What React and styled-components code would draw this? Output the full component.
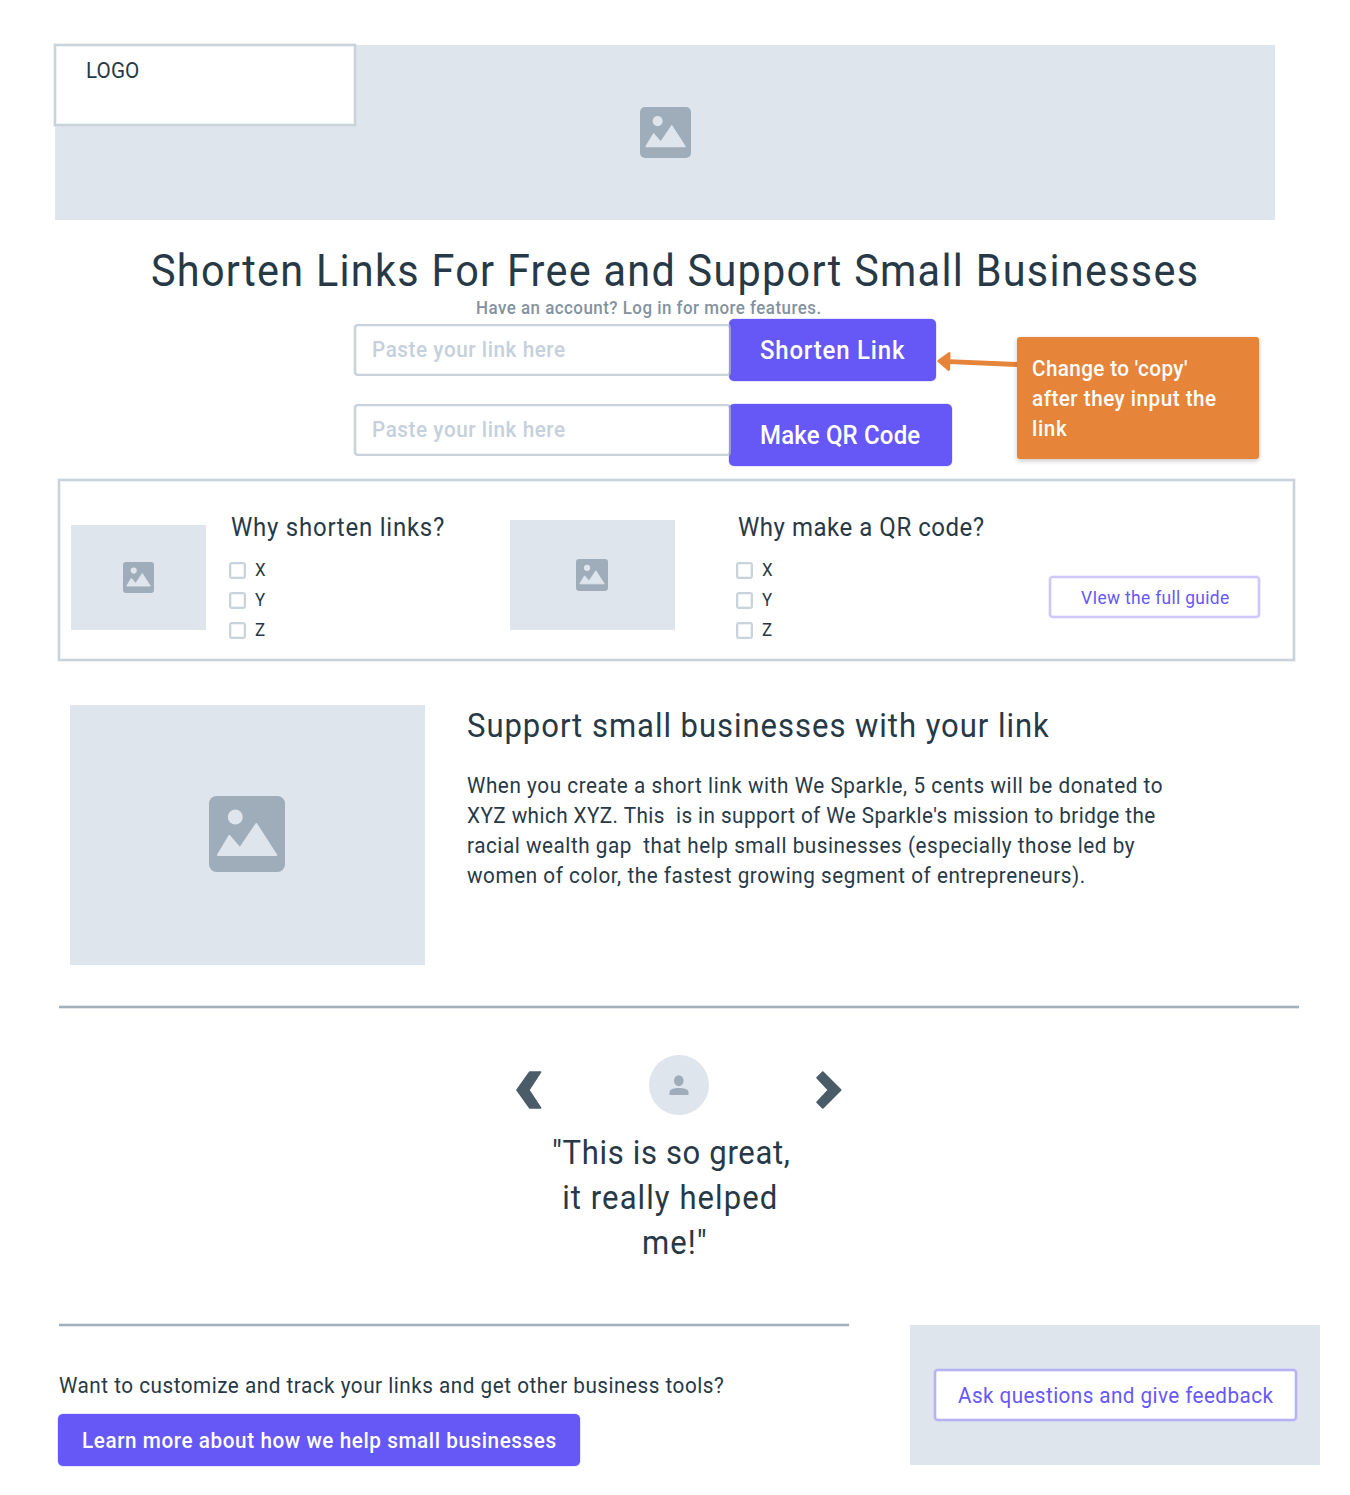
import React from "react";
import styled, { createGlobalStyle } from "styled-components";

const c = {
  ink: "#273947",
  block: "#dfe5ed",
  icon: "#9eadb9",
  line: "#c8d3dc",
  lineSoft: "rgba(200, 211, 220, 0.3)",
  rule: "#a2b0bc",
  ruleSoft: "rgba(162, 176, 188, 0.3)",
  purple: "#6658f6",
  purpleSoft: "rgba(102, 88, 246, 0.3)",
  orange: "#e68439",
};

const GlobalStyle = createGlobalStyle`
  * { box-sizing: border-box; }
  body { margin: 0; background: #fff; }
`;

const Page = styled.main`
  width: 1350px;
  height: 1495px;
  overflow: hidden;
  display: flex;
  flex-direction: column;
  align-items: flex-start;
  background: #fff;
  color: ${c.ink};
  font-family: Roboto, "Liberation Sans", sans-serif;
  font-size: 22px;
  line-height: 30px;
`;

const Text = styled.span`
  display: block;
  white-space: pre;
  letter-spacing: ${(p) => p.$track}px;
  transform: scaleX(0.94);
  transform-origin: ${(p) => p.$origin || "left"};
`;

const ImageBlock = styled.div`
  width: ${(p) => p.$w}px;
  height: ${(p) => p.$h}px;
  padding: ${(p) => p.$pad || "0"};
  flex: none;
  display: flex;
  align-items: center;
  justify-content: center;
  background: ${c.block};
`;

const Hero = styled.header`
  margin: 45px 0 0 55px;
  width: 1220px;
  height: 175px;
  display: grid;
  background: ${c.block};
  > * { grid-area: 1 / 1; }
`;

const HeroIcon = styled.div`
  display: flex;
  align-items: center;
  justify-content: center;
`;

const LogoBox = styled.div`
  margin: -1px 0 0 -1px;
  width: 302px;
  height: 82px;
  padding: 10px 0 0 29.5px;
  border: 2px solid ${c.line};
  box-shadow: 0 0 0 1px ${c.lineSoft}, inset 0 0 0 1px ${c.lineSoft};
  background: #fff;
`;

const Title = styled.h1`
  margin: 20px 0 0 151px;
  height: 60px;
  padding-top: 1px;
  font-size: 44px;
  line-height: 60px;
  font-weight: 400;
`;

const Subtitle = styled.p`
  margin: -4px 0 0 476px;
  height: 23px;
  font-size: 18px;
  line-height: 24px;
  font-weight: 500;
  color: #8392a0;
`;

const Tools = styled.section`
  margin-left: 354px;
  height: 160px;
  display: flex;
  align-items: flex-start;
`;

const Forms = styled.div`
  width: 583px;
  display: flex;
  flex-direction: column;
  gap: 23px;
`;

const FormRow = styled.div`
  display: flex;
  align-items: flex-start;
`;

const LinkField = styled.div`
  position: relative;
  z-index: 1;
  flex: none;
  width: 377px;
  height: 52px;
  margin-top: ${(p) => p.$drop}px;
  padding: 0 0 0 16px;
  display: flex;
  align-items: center;
  border: 2px solid ${c.line};
  border-right-color: #9b98d3;
  border-radius: 4px;
  box-shadow: -1px 0 0 ${c.lineSoft}, inset 0 0 0 1px ${c.lineSoft};
  background: #fff;
  color: #c5d0dc;
  font-size: 22px;
  font-weight: 500;
`;

const ActionButton = styled.button`
  flex: none;
  width: ${(p) => p.$w}px;
  height: ${(p) => p.$h}px;
  margin: ${(p) => p.$margin || "0"};
  padding: ${(p) => p.$drop || 0}px 0 0 ${(p) => p.$pad}px;
  display: flex;
  align-items: center;
  border: 0;
  border-radius: 5px;
  box-shadow: 0 0 0 0.5px ${c.purpleSoft};
  background: ${c.purple};
  color: #fff;
  font: inherit;
  font-size: ${(p) => p.$size}px;
  font-weight: 500;
`;

const OutlineButton = styled.button`
  flex: none;
  width: ${(p) => p.$w}px;
  height: ${(p) => p.$h}px;
  margin-top: ${(p) => p.$top}px;
  padding: 2px 0 0 ${(p) => p.$pad}px;
  display: flex;
  align-items: center;
  border: 2px solid ${(p) => p.$line};
  border-radius: 4px;
  box-shadow: 0 0 0 1px ${(p) => p.$line}4d, inset 0 0 0 1px ${(p) => p.$line}4d;
  background: #fff;
  color: ${c.purple};
  font: inherit;
  font-size: ${(p) => p.$size}px;
`;

const Arrow = styled.svg`
  flex: none;
  width: 80px;
  height: 24px;
  margin-top: 30px;
`;

const Note = styled.aside`
  flex: none;
  width: 242px;
  height: 122px;
  margin: 18px 0 0 -0.5px;
  padding: 17px 0 0 15px;
  border-radius: 3px;
  background: ${c.orange};
  box-shadow: 0 2px 5px rgba(0, 0, 0, 0.22);
  color: #fff;
  font-weight: 500;
`;

const Panel = styled.section`
  margin-left: 58px;
  width: 1237px;
  height: 182px;
  padding: 31px 0 14px 11px;
  display: grid;
  grid-template-columns: 158px 281px 226px 313px 211px;
  align-items: start;
  border: 2px solid ${c.line};
  box-shadow: 0 0 0 1px ${c.lineSoft}, inset 0 0 0 1px ${c.lineSoft};
`;

const Thumb = styled(ImageBlock)`
  align-self: end;
  margin-bottom: 15px;
`;

const Reasons = styled.div`
  display: flex;
  flex-direction: column;
`;

const ReasonTitle = styled.h2`
  margin: 0 0 13px 1.5px;
  font-size: 25.5px;
  line-height: 30px;
  font-weight: 400;
`;

const Check = styled.label`
  height: 30px;
  display: flex;
  align-items: center;
  gap: 9px;
  font-size: 18px;
`;

const Box = styled.span`
  width: 17px;
  height: 17px;
  border: 2px solid ${c.line};
  border-radius: 3px;
  box-shadow: inset 0 0 0 1px ${c.lineSoft};
`;

const Support = styled.section`
  margin: 44px 0 0 70px;
  display: flex;
  gap: 41.5px;
`;

const SupportTitle = styled.h2`
  margin: -2px 0 23px;
  font-size: 33px;
  line-height: 45px;
  font-weight: 400;
`;

const Rule = styled.hr`
  margin: ${(p) => p.$margin};
  width: ${(p) => p.$w}px;
  height: 2px;
  flex: none;
  border: 0;
  background: ${c.rule};
  box-shadow: 0 1px 0 ${c.ruleSoft}, 0 -1px 0 ${c.ruleSoft};
`;

const Carousel = styled.section`
  margin: 47px 0 0 516px;
  width: 326px;
  display: flex;
  align-items: flex-start;
  justify-content: space-between;
`;

const Chevron = styled.svg`
  width: 26px;
  height: 38px;
  margin-top: 16px;
`;

const Avatar = styled.svg`
  width: 60px;
  height: 60px;
`;

const Quote = styled.blockquote`
  margin: 15px 0 0 525px;
  width: 300px;
  display: flex;
  flex-direction: column;
  align-items: center;
  font-size: 33px;
  line-height: 45px;
`;

const Footer = styled.footer`
  margin: 59px 0 0 58px;
  display: flex;
  align-items: flex-start;
  gap: 61px;
`;

const FooterMain = styled.div`
  width: 791px;
  display: flex;
  flex-direction: column;
  align-items: flex-start;
`;

const FooterPrompt = styled.p`
  margin: 45px 0 13px 1px;
`;

const Feedback = styled.div`
  width: 410px;
  height: 140px;
  margin-top: 1px;
  display: flex;
  align-items: center;
  justify-content: center;
  background: ${c.block};
`;

function ImageIcon({ size }) {
  return (
    <svg width={size} height={size} viewBox="0 0 76 76">
      <rect width="76" height="76" rx="7.5" fill={c.icon} />
      <circle cx="26.3" cy="21" r="7.5" fill={c.block} />
      <path
        d="M9 59L20.3 40L31 52.3L47.3 28L67.2 59Z"
        fill={c.block}
        stroke={c.block}
        strokeWidth="2"
        strokeLinejoin="round"
      />
    </svg>
  );
}

function ReasonList({ title, track }) {
  return (
    <Reasons>
      <ReasonTitle>
        <Text $track={track}>{title}</Text>
      </ReasonTitle>
      {["X", "Y", "Z"].map((item) => (
        <Check key={item}>
          <Box />
          <Text $track={0}>{item}</Text>
        </Check>
      ))}
    </Reasons>
  );
}

const noteLines = [
  ["Change to 'copy'", 0.4],
  ["after they input the", 0.52],
  ["link", 0.7],
];

const supportLines = [
  ["When you create a short link with We Sparkle, 5 cents will be donated to", 0.6],
  ["XYZ which XYZ. This  is in support of We Sparkle's mission to bridge the", 0.46],
  ["racial wealth gap  that help small businesses (especially those led by", 0.58],
  ["women of color, the fastest growing segment of entrepreneurs).", 0.59],
];

const quoteLines = [
  ['"This is so great, ', 0.71],
  ["it really helped ", 1.15],
  ['me!"', 1.1],
];

const Lines = ({ items, origin }) =>
  items.map(([text, track]) => (
    <Text key={text} $track={track} $origin={origin}>
      {text}
    </Text>
  ));

export default function App() {
  return (
    <>
      <GlobalStyle />
      <Page>
        <Hero>
          <HeroIcon>
            <ImageIcon size={51} />
          </HeroIcon>
          <LogoBox>
            <Text $track={0.1}>LOGO</Text>
          </LogoBox>
        </Hero>

        <Title>
          <Text $track={1.38}>Shorten Links For Free and Support Small Businesses</Text>
        </Title>
        <Subtitle>
          <Text $track={0.51}>Have an account? Log in for more features.</Text>
        </Subtitle>

        <Tools>
          <Forms>
            <FormRow>
              <LinkField $drop={5}>
                <Text $track={0.6}>Paste your link here</Text>
              </LinkField>
              <ActionButton $w={207} $h={62} $pad={31} $size={25.5} $margin="0 0 0 -2px">
                <Text $track={0.86}>Shorten Link</Text>
              </ActionButton>
            </FormRow>
            <FormRow>
              <LinkField $drop={0}>
                <Text $track={0.6}>Paste your link here</Text>
              </LinkField>
              <ActionButton $w={223} $h={62} $pad={31} $size={25.5} $margin="0 0 0 -2px">
                <Text $track={0.2}>Make QR Code</Text>
              </ActionButton>
            </FormRow>
          </Forms>
          <Arrow viewBox="0 0 80 24">
            <path d="M12 12.6L80 15.5" stroke={c.orange} strokeWidth="4.8" />
            <path
              d="M1.6 12L12.3 4.2L11.8 20.8Z"
              fill={c.orange}
              stroke={c.orange}
              strokeWidth="2.4"
              strokeLinejoin="round"
            />
          </Arrow>
          <Note>
            <Lines items={noteLines} />
          </Note>
        </Tools>

        <Panel>
          <Thumb $w={135} $h={105}>
            <ImageIcon size={31} />
          </Thumb>
          <ReasonList title="Why shorten links?" track={0.82} />
          <Thumb $w={165} $h={110} $pad="0 2px 1px 0">
            <ImageIcon size={32} />
          </Thumb>
          <ReasonList title="Why make a QR code?" track={0.58} />
          <OutlineButton $w={211} $h={42} $top={64} $pad={30} $size={18.5} $line="#cdc7fc">
            <Text $track={0.35}>VIew the full guide</Text>
          </OutlineButton>
        </Panel>

        <Support>
          <ImageBlock $w={355} $h={260} $pad="0 2px 2px 0">
            <ImageIcon size={76} />
          </ImageBlock>
          <div>
            <SupportTitle>
              <Text $track={1.03}>Support small businesses with your link</Text>
            </SupportTitle>
            <Lines items={supportLines} />
          </div>
        </Support>

        <Rule $w={1240} $margin="41px 0 0 59px" />

        <Carousel>
          <Chevron viewBox="0 0 26 38">
            <path
              d="M13.8 1H24.6L12.8 19L24.6 37H13.8L1 19Z"
              fill="#4b5c69"
              stroke="#4b5c69"
              strokeWidth="1.6"
              strokeLinejoin="round"
            />
          </Chevron>
          <Avatar viewBox="0 0 60 60">
            <circle cx="30" cy="30" r="30" fill={c.block} />
            <ellipse cx="29.8" cy="25.7" rx="4.8" ry="5.5" fill={c.icon} />
            <path d="M20.5 40V37.5C20.5 34 25 33 30 33S39.5 34 39.5 37.5V40Z" fill={c.icon} />
          </Avatar>
          <Chevron viewBox="0 0 26 38">
            <path
              d="M6.7 1.4L1.4 6.8L12.8 19L1.4 31.2L6.7 36.6L24.4 19Z"
              fill="#4b5c69"
              stroke="#4b5c69"
              strokeWidth="2.2"
              strokeLinejoin="round"
            />
          </Chevron>
        </Carousel>

        <Quote>
          <Lines items={quoteLines} origin="center" />
        </Quote>

        <Footer>
          <FooterMain>
            <Rule $w={790} $margin="0 0 0 1px" />
            <FooterPrompt>
              <Text $track={0.55}>
                Want to customize and track your links and get other business tools?
              </Text>
            </FooterPrompt>
            <ActionButton $w={522} $h={52} $pad={24} $drop={1} $size={22}>
              <Text $track={0.62}>Learn more about how we help small businesses</Text>
            </ActionButton>
          </FooterMain>
          <Feedback>
            <OutlineButton $w={363} $h={52} $top={0} $pad={22} $size={22} $line="#b7b2f3">
              <Text $track={0.45}>Ask questions and give feedback</Text>
            </OutlineButton>
          </Feedback>
        </Footer>
      </Page>
    </>
  );
}
